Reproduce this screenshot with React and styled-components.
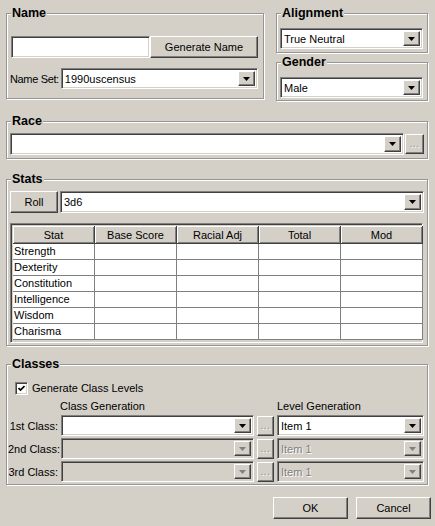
import React from 'react';
import styled, { createGlobalStyle, css } from 'styled-components';

const GlobalStyle = createGlobalStyle`
  html, body { margin: 0; padding: 0; background: #d4d0c8; }
  * { box-sizing: border-box; }
`;

const FONT = `"Liberation Sans", Arial, sans-serif`;

const sunken = css`
  border: 1px solid;
  border-color: #808080 #ffffff #ffffff #808080;
  box-shadow: inset 1px 1px 0 #404040, inset -1px -1px 0 #d4d0c8;
`;

const raised = css`
  border: 1px solid;
  border-color: #ffffff #404040 #404040 #ffffff;
  box-shadow: inset -1px -1px 0 #808080;
  background: #d4d0c8;
`;

const Window = styled.div`
  width: 435px;
  height: 526px;
  padding: 13px 7px 0 6px;
  background: #d4d0c8;
  font-family: ${FONT};
  font-size: 11px;
  color: #000;
  display: flex;
  flex-direction: column;
`;

const TopRow = styled.div`
  display: flex;
  gap: 12px;
  align-items: flex-start;
`;

const RightCol = styled.div`
  width: 152px;
  display: flex;
  flex-direction: column;
`;

const Group = styled.div`
  position: relative;
  border: 1px solid #959595;
  box-shadow: inset 1px 1px 0 #ffffff, 1px 1px 0 #ffffff;
  padding: ${(p) => p.$pad};
  margin-top: ${(p) => p.$mt || 0}px;
  flex: ${(p) => (p.$grow ? 1 : 'none')};
  display: flex;
  flex-direction: column;
  gap: ${(p) => p.$gap || 0}px;
`;

const Legend = styled.span`
  position: absolute;
  top: -8px;
  left: 4px;
  padding: 0 1px;
  background: #d4d0c8;
  font-weight: bold;
  font-size: 12.5px;
  line-height: 14px;
`;

const Row = styled.div`
  display: flex;
  align-items: center;
  gap: ${(p) => p.$gap || 0}px;
  height: ${(p) => p.$h}px;
`;

const TextField = styled.div`
  ${sunken};
  background: #fff;
  flex: 1;
  height: 100%;
`;

const Button = styled.button`
  ${raised};
  font-family: ${FONT};
  font-size: 11px;
  color: #000;
  padding: 0;
  width: ${(p) => p.$w}px;
  height: ${(p) => p.$h || 22}px;
  flex: none;
`;

const Label = styled.span`
  white-space: nowrap;
  flex: none;
  letter-spacing: -0.35px;
  margin-left: -1px;
`;

const ComboBox = styled.div`
  ${sunken};
  background: ${(p) => (p.$disabled ? '#d4d0c8' : '#fff')};
  flex: 1;
  height: ${(p) => p.$h || 21}px;
  display: flex;
  align-items: stretch;
  padding: 2px;
  min-width: 0;
`;

const ComboText = styled.span`
  flex: 1;
  padding-left: 1px;
  display: flex;
  align-items: center;
  white-space: nowrap;
  color: ${(p) => (p.$disabled ? '#808080' : '#000')};
  text-shadow: ${(p) => (p.$disabled ? '1px 1px 0 #fff' : 'none')};
`;

const ArrowBtn = styled.span`
  ${raised};
  width: 17px;
  flex: none;
  display: flex;
  align-items: center;
  justify-content: center;
`;

const DotsBtn = styled.span`
  ${raised};
  width: ${(p) => p.$w || 18}px;
  height: ${(p) => p.$h || 20}px;
  flex: none;
  display: flex;
  align-items: flex-end;
  justify-content: center;
  padding-bottom: 4px;
  color: #909090;
  text-shadow: 1px 1px 0 #fff;
  font-size: 10px;
  line-height: 10px;
  letter-spacing: 0.5px;
`;

const Arrow = ({ disabled }) => (
  <svg width="7" height="4" viewBox="0 0 7 4">
    <polygon points="0,0 7,0 3.5,4" fill={disabled ? '#808080' : '#000'} />
  </svg>
);

const Combo = ({ value, disabled, h }) => (
  <ComboBox $disabled={disabled} $h={h}>
    <ComboText $disabled={disabled}>{value}</ComboText>
    <ArrowBtn>
      <Arrow disabled={disabled} />
    </ArrowBtn>
  </ComboBox>
);

const TableWrap = styled.div`
  ${sunken};
  background: #d4d0c8;
  height: 120px;
  margin: 10px 1px 0 0;
  padding: 2px;
`;

const Table = styled.table`
  width: 100%;
  table-layout: fixed;
  border-collapse: separate;
  border-spacing: 0;
  font-size: 11px;
`;

const Th = styled.th`
  font-weight: normal;
  height: 18px;
  padding: 0;
  text-align: center;
  background: #d4d0c8;
  border-right: 1px solid #404040;
  border-bottom: 1px solid #404040;
  box-shadow: inset 1px 1px 0 #fff, inset -1px -1px 0 #808080;
`;

const Td = styled.td`
  height: 16px;
  padding: 0 1px;
  background: #fff;
  border-right: 1px solid #808080;
  border-bottom: 1px solid #808080;
  line-height: 15px;
  white-space: nowrap;
`;

const CheckRow = styled.div`
  display: flex;
  align-items: center;
  gap: 4px;
  height: 14px;
  padding-left: 5px;
`;

const CheckBox = styled.span`
  ${sunken};
  width: 13px;
  height: 13px;
  background: #fff;
  display: flex;
  align-items: center;
  justify-content: center;
`;

const ClassGrid = styled.div`
  display: grid;
  grid-template-columns: 48px 1fr 17px 147px;
  grid-template-rows: 13px 21px 21px 21px;
  column-gap: 3px;
  row-gap: 2px;
  margin-top: 5px;
  align-items: center;
`;

const ColHead = styled.span`
  grid-column: ${(p) => p.$col};
  line-height: 13px;
  white-space: nowrap;
  margin-left: ${(p) => p.$ml || 0}px;
`;

const RowLabel = styled.span`
  text-align: right;
  white-space: nowrap;
  margin-left: -2px;
`;

const ButtonRow = styled.div`
  display: flex;
  justify-content: flex-end;
  gap: 8px;
  margin-top: 12px;
  margin-right: -3px;
`;

const stats = ['Strength', 'Dexterity', 'Constitution', 'Intelligence', 'Wisdom', 'Charisma'];
const heads = ['Stat', 'Base Score', 'Racial Adj', 'Total', 'Mod'];
const classes = [
  { label: '1st Class:', disabled: false },
  { label: '2nd Class:', disabled: true },
  { label: '3rd Class:', disabled: true },
];

export default function App() {
  return (
    <>
      <GlobalStyle />
      <Window>
        <TopRow>
          <Group $grow $pad="22px 5px 9px 4px" $gap={10}>
            <Legend>Name</Legend>
            <Row $h={22}>
              <TextField />
              <Button $w={108}>Generate Name</Button>
            </Row>
            <Row $h={21} $gap={2}>
              <Label>Name Set:</Label>
              <Combo value="1990uscensus" />
            </Row>
          </Group>
          <RightCol>
            <Group $pad="14px 4px 3px 3px">
              <Legend>Alignment</Legend>
              <Row $h={21}>
                <Combo value="True Neutral" />
              </Row>
            </Group>
            <Group $mt={9} $pad="14px 4px 2px 3px">
              <Legend>Gender</Legend>
              <Row $h={21}>
                <Combo value="Male" />
              </Row>
            </Group>
          </RightCol>
        </TopRow>

        <Group $mt={20} $pad="11px 3px 3px 3px">
          <Legend>Race</Legend>
          <Row $h={22} $gap={1}>
            <Combo value="" h={22} />
            <DotsBtn $w={19} $h={20}>...</DotsBtn>
          </Row>
        </Group>

        <Group $mt={20} $pad="11px 3px 2px 3px">
          <Legend>Stats</Legend>
          <Row $h={22} $gap={2}>
            <Button $w={48}>Roll</Button>
            <Combo value="3d6" h={22} />
          </Row>
          <TableWrap>
            <Table>
              <colgroup>
                {heads.map((h) => (
                  <col key={h} style={{ width: 82 }} />
                ))}
              </colgroup>
              <thead>
                <tr>
                  {heads.map((h) => (
                    <Th key={h}>{h}</Th>
                  ))}
                </tr>
              </thead>
              <tbody>
                {stats.map((s) => (
                  <tr key={s}>
                    <Td>{s}</Td>
                    <Td />
                    <Td />
                    <Td />
                    <Td />
                  </tr>
                ))}
              </tbody>
            </Table>
          </TableWrap>
        </Group>

        <Group $mt={18} $pad="16px 3px 2px 3px">
          <Legend>Classes</Legend>
          <CheckRow>
            <CheckBox>
              <svg width="7" height="7" viewBox="0 0 7 7">
                <polyline points="0.5,3 2.5,5 6.5,1" fill="none" stroke="#000" strokeWidth="1.7" />
              </svg>
            </CheckBox>
            <span>Generate Class Levels</span>
          </CheckRow>
          <ClassGrid>
            <ColHead $col="2 / 4" $ml={-1}>Class Generation</ColHead>
            <ColHead $col="4">Level Generation</ColHead>
            {classes.map((c) => (
              <React.Fragment key={c.label}>
                <RowLabel>{c.label}</RowLabel>
                <Combo value="" disabled={c.disabled} />
                <DotsBtn $w={17} $h={20}>...</DotsBtn>
                <Combo value="Item 1" disabled={c.disabled} />
              </React.Fragment>
            ))}
          </ClassGrid>
        </Group>

        <ButtonRow>
          <Button $w={75}>OK</Button>
          <Button $w={75}>Cancel</Button>
        </ButtonRow>
      </Window>
    </>
  );
}
